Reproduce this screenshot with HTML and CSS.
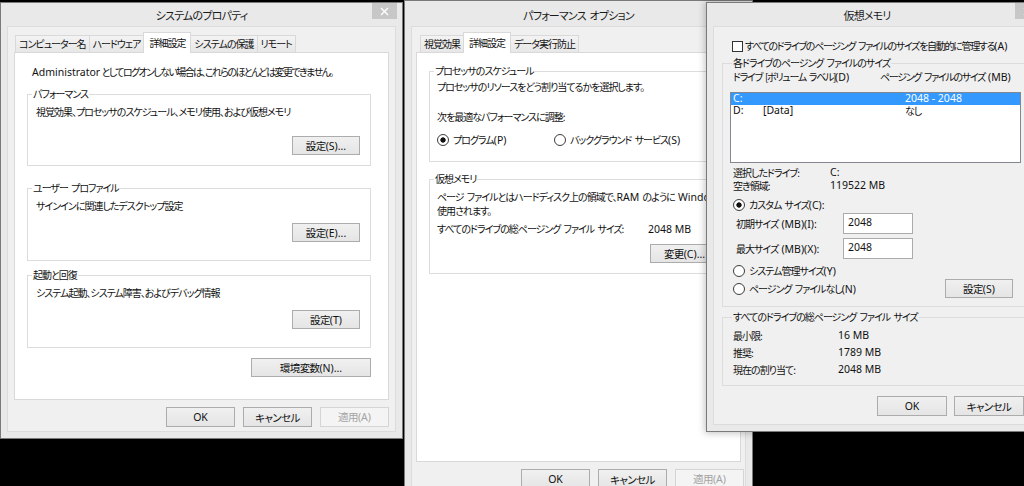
FILE: index.html
```html
<!DOCTYPE html>
<html lang="ja">
<head>
<meta charset="utf-8">
<title>仮想メモリ</title>
<link rel="stylesheet" href="styles.css">
</head>
<body>
<section class="win w1">
  <header class="titlebar"><span class="title">システムのプロパティ</span><span class="close"><svg width="9" height="9" viewBox="0 0 9 9"><path d="M1 1L8 8M8 1L1 8" stroke="#fff" stroke-width="1.4"/></svg></span></header>
  <div class="client c1">
    <nav class="tabs">
      <span class="tab">コンピューター名</span>
      <span class="tab">ハードウェア</span>
      <span class="tab sel">詳細設定</span>
      <span class="tab">システムの保護</span>
      <span class="tab">リモート</span>
    </nav>
    <div class="panel p1">
      <p class="note"><span class="en">Administrator</span> <span class="tight">としてログオンしない場合は、これらのほとんどは変更できません。</span></p>
      <fieldset class="grp g1">
        <legend>パフォーマンス</legend>
        <p>視覚効果、プロセッサのスケジュール、メモリ使用、および仮想メモリ</p>
        <div class="btnrow"><button class="btn">設定<span class="en">(S)...</span></button></div>
      </fieldset>
      <fieldset class="grp g2">
        <legend>ユーザー プロファイル</legend>
        <p>サインインに関連したデスクトップ設定</p>
        <div class="btnrow"><button class="btn">設定<span class="en">(E)...</span></button></div>
      </fieldset>
      <fieldset class="grp g3">
        <legend>起動と回復</legend>
        <p>システム起動、システム障害、およびデバッグ情報</p>
        <div class="btnrow"><button class="btn">設定<span class="en">(T)</span></button></div>
      </fieldset>
      <div class="btnrow env"><button class="btn wide">環境変数<span class="en">(N)...</span></button></div>
    </div>
    <div class="actions"><button class="btn"><span class="en">OK</span></button><button class="btn">キャンセル</button><button class="btn" disabled>適用<span class="en">(A)</span></button></div>
  </div>
</section>

<section class="win w2">
  <header class="titlebar"><span class="title">パフォーマンス オプション</span></header>
  <div class="client c2">
    <nav class="tabs">
      <span class="tab">視覚効果</span>
      <span class="tab sel">詳細設定</span>
      <span class="tab">データ実行防止</span>
    </nav>
    <div class="panel p2">
      <fieldset class="grp g4">
        <legend>プロセッサのスケジュール</legend>
        <p>プロセッサのリソースをどう割り当てるかを選択します。</p>
        <p class="hint">次を最適なパフォーマンスに調整:</p>
        <div class="radios"><span class="radio on">プログラム<span class="en">(P)</span></span><span class="radio">バックグラウンド サービス<span class="en">(S)</span></span></div>
      </fieldset>
      <fieldset class="grp g5">
        <legend>仮想メモリ</legend>
        <p class="pline">ページ ファイルとはハードディスク上の領域で、<span class="en">RAM</span> のように <span class="en">Windows</span> で<br>使用されます。</p>
        <div class="sizerow"><span class="lbl">すべてのドライブの総ページング ファイル サイズ:</span><span class="en">2048 MB</span></div>
        <div class="btnrow"><button class="btn">変更<span class="en">(C)...</span></button></div>
      </fieldset>
    </div>
    <div class="actions"><button class="btn"><span class="en">OK</span></button><button class="btn">キャンセル</button><button class="btn" disabled>適用<span class="en">(A)</span></button></div>
  </div>
</section>

<section class="win w3">
  <header class="titlebar"><span class="title">仮想メモリ</span><span class="close"><svg width="9" height="9" viewBox="0 0 9 9"><path d="M1 1L8 8M8 1L1 8" stroke="#fff" stroke-width="1.4"/></svg></span></header>
  <div class="client c3">
    <label class="check"><span class="box"></span>すべてのドライブのページング ファイルのサイズを自動的に管理する<span class="en">(A)</span></label>
    <fieldset class="grp g6">
      <legend>各ドライブのページング ファイルのサイズ</legend>
      <div class="cols head"><span class="c-a">ドライブ</span><span class="c-b">[ボリューム ラベル]<span class="en">(D)</span></span><span>ページング ファイルのサイズ <span class="en">(MB)</span></span></div>
      <div class="listbox">
        <div class="cols row selrow"><span class="c-a en">C:</span><span class="c-b"></span><span class="en">2048 - 2048</span></div>
        <div class="cols row"><span class="c-a en">D:</span><span class="c-b en">[Data]</span><span>なし</span></div>
      </div>
      <div class="info i1"><span class="lbl">選択したドライブ:</span><span class="en">C:</span></div>
      <div class="info"><span class="lbl">空き領域:</span><span class="en">119522 MB</span></div>
      <span class="radio on custom">カスタム サイズ<span class="en">(C):</span></span>
      <div class="field f1"><span class="flbl">初期サイズ <span class="en">(MB)(I):</span></span><input class="num" type="text" value="2048"></div>
      <div class="field f2"><span class="flbl">最大サイズ <span class="en">(MB)(X):</span></span><input class="num" type="text" value="2048"></div>
      <span class="radio sys">システム管理サイズ<span class="en">(Y)</span></span>
      <div class="lastrow"><span class="radio">ページング ファイルなし<span class="en">(N)</span></span><button class="btn">設定<span class="en">(S)</span></button></div>
    </fieldset>
    <fieldset class="grp g7">
      <legend>すべてのドライブの総ページング ファイル サイズ</legend>
      <div class="info"><span class="lbl">最小限:</span><span class="en">16 MB</span></div>
      <div class="info"><span class="lbl">推奨:</span><span class="en">1789 MB</span></div>
      <div class="info"><span class="lbl">現在の割り当て:</span><span class="en">2048 MB</span></div>
    </fieldset>
    <div class="actions"><button class="btn"><span class="en">OK</span></button><button class="btn">キャンセル</button></div>
  </div>
</section>
</body>
</html>
```

FILE: styles.css
```css
* { box-sizing: border-box; }
html, body { margin: 0; padding: 0; }
body {
  width: 1024px;
  height: 486px;
  overflow: hidden;
  position: relative;
  background: #000;
  font-family: "Noto Sans CJK JP", "Noto Sans", sans-serif;
  font-size: 10px;
  line-height: 14px;
  letter-spacing: -1px;
  word-spacing: 2px;
  color: #111;
  font-feature-settings: "palt";
}
p { margin: 0; white-space: nowrap; }
.en {
  font-family: "Noto Sans", "Noto Sans CJK JP", sans-serif;
  font-size: 10.5px;
  letter-spacing: 0;
  word-spacing: 0;
}
.tight { letter-spacing: -1.6px; }

/* windows */
.win {
  position: absolute;
  display: flex;
  flex-direction: column;
  background: #e9e9e9;
  border: 1px solid #7a7a7a;
}
.w1 { left: 0; top: 2px; width: 403px; height: 437px; }
.w2 { left: 404px; top: 0; width: 349px; height: 500px; }
.w3 { left: 706px; top: 2px; width: 340px; height: 430px; z-index: 2; box-shadow: 0 0 7px 1px rgba(0,0,0,.25); }

.titlebar {
  flex: none;
  height: 23px;
  position: relative;
  display: flex;
  justify-content: center;
  padding-top: 5px;
  font-size: 11px;
  line-height: 15px;
  letter-spacing: -0.8px;
  color: #1a1a1a;
}
.w2 .titlebar { height: 25px; padding-top: 7px; }
.w3 .titlebar { padding-right: 18px; }
.close {
  position: absolute;
  top: 0;
  right: 5px;
  width: 25px;
  height: 16px;
  background: #c7c7c7;
  display: flex;
  align-items: center;
  justify-content: center;
}

.client {
  flex: 1;
  min-height: 0;
  margin: 0 6px 6px;
  border: 1px solid #dcdcdc;
  background: #f0f0f0;
  display: flex;
  flex-direction: column;
}
.c1 { padding: 5px 6px 4px; }
.c2 { padding: 5px 4px 0; }
.c3 { padding: 12px 10px 0 8px; }

/* tabs */
.tabs {
  flex: none;
  height: 20px;
  display: flex;
  align-items: flex-end;
  position: relative;
  z-index: 1;
}
.c1 .tabs { padding-left: 1px; }
.c2 .tabs { padding-left: 4px; }
.tab {
  height: 17px;
  padding: 0 3px 0 3px;
  border: 1px solid #d9d9d9;
  border-bottom: 0;
  background: linear-gradient(#f3f3f3, #e7e7e7);
  line-height: 16px;
  white-space: nowrap;
}
.tab + .tab { margin-left: -1px; }
.tab.sel {
  height: 21px;
  margin-bottom: -1px;
  padding: 0 5px 0 5px;
  background: #fff;
  line-height: 19px;
  position: relative;
}

.panel { flex: none; background: #fff; border: 1px solid #d9d9d9; }
.p1 { height: 348px; }
.p2 { height: 410px; }

/* group boxes */
.grp { margin: 0; padding: 0; border: 1px solid #dcdcdc; min-width: 0; }
.grp legend { padding: 0 1px; line-height: 14px; }

.note { margin: 12px 0 0 17px; word-spacing: 0; }
.p1 .grp { margin: 0 0 0 12px; width: 344px; padding: 4px 10px 10px 8px; }
.p1 .grp legend { margin-left: -4px; }
.p1 .g1 { margin-top: 8px; }
.p1 .g2 { margin-top: 15px; padding-bottom: 18px; }
.p1 .g3 { margin-top: 7px; padding-bottom: 18px; }

.btnrow { display: flex; justify-content: flex-end; }
.g1 .btnrow { margin-top: 17px; }
.g2 .btnrow, .g3 .btnrow { margin-top: 10px; }
.env { margin-top: 10px; padding-right: 17px; }

/* buttons */
.btn {
  font: inherit;
  font-size: 10.5px;
  letter-spacing: -0.6px;
  color: #111;
  height: 19px;
  width: 68px;
  padding: 0;
  border: 1px solid #acacac;
  background: linear-gradient(#f0f0f0, #e5e5e5);
  line-height: 17px;
  white-space: nowrap;
}
.btn .en { letter-spacing: 0; }
.btn.wide { width: 120px; }
.btn:disabled { color: #a3a3a3; border-color: #d5d5d5; background: #f4f4f4; }
.actions { flex: none; display: flex; justify-content: flex-end; gap: 8px; margin-top: 7px; }
.actions .btn { width: 69px; height: 20px; }
.c2 .actions { margin-right: -3px; }

/* performance options */
.p2 .grp { margin: 0 12px; padding: 2px 8px 14px 7px; }
.p2 .grp legend { margin-left: -3px; }
.p2 .g4 { margin-top: 11px; }
.p2 .g5 { margin-top: 10px; padding: 4px 8px 10px 7px; }
.g4 .hint { margin-top: 16px; }
.radios { display: flex; margin-top: 9px; }
.radios .radio:first-child { width: 117px; }
.pline { line-height: 13px; }
.sizerow { display: flex; margin-top: 5px; white-space: nowrap; }
.sizerow .lbl { width: 211px; }
.g5 .btnrow { margin-top: 8px; }
.g5 .btn { width: 69px; }

/* radio & check */
.radio { display: flex; align-items: center; white-space: nowrap; }
.radio::before {
  content: "";
  flex: none;
  width: 10px;
  height: 10px;
  border: 1px solid #3c3c3c;
  border-radius: 50%;
  background: #fff;
  margin-right: 4px;
}
.radio.on::before { background: radial-gradient(circle at center, #111 0 2.3px, #fff 3px); }
.check { display: flex; align-items: center; padding-left: 10px; white-space: nowrap; letter-spacing: -1.3px; }
.check .box { width: 11px; height: 11px; border: 1px solid #333; background: #fff; margin-right: 2px; }

/* virtual memory */
.c3 .grp { margin: 0; padding: 0 0 8px 0; }
.c3 .grp legend { margin-left: 9px; }
.c3 .g6 { margin-top: 3px; }
.cols { display: flex; white-space: nowrap; }
.head { margin-left: 10px; letter-spacing: -1.3px; }
.head .c-a { width: 32px; }
.head .c-b { width: 115px; }
.listbox {
  margin: 8px 0 0 7px;
  width: 291px;
  height: 71px;
  border: 1px solid #828790;
  background: #fff;
}
.row { height: 12px; line-height: 11px; padding-left: 2px; }
.row .c-a { width: 30px; }
.row .c-b { width: 142px; }
.selrow { background: #3399ff; color: #fff; }
.info { display: flex; margin-left: 10px; line-height: 13px; white-space: nowrap; }
.info .lbl { width: 97px; }
.i1 { margin-top: 3px; }
.custom { margin: 6px 0 0 10px; }
.field { display: flex; align-items: center; margin-left: 13px; white-space: nowrap; }
.f1 { margin-top: 1px; }
.f2 { margin-top: 4px; }
.flbl { width: 107px; }
.num {
  font-family: "Noto Sans", sans-serif;
  font-size: 10.5px;
  letter-spacing: 0;
  color: #111;
  width: 70px;
  height: 21px;
  border: 1px solid #ababab;
  padding: 0 4px 3px;
  background: #fff;
}
.sys { margin: 5px 0 0 10px; }
.lastrow { display: flex; align-items: center; justify-content: space-between; margin: 1px 14px 0 10px; }
.c3 .g7 { margin-top: 3px; padding: 3px 0 7px 0; }
.g7 .info { line-height: 17px; }
.g7 .info .lbl { width: 105px; }
.c3 .actions { gap: 7px; margin-top: 10px; margin-right: 4px; }
.c3 .actions .btn { width: 70px; }
```
